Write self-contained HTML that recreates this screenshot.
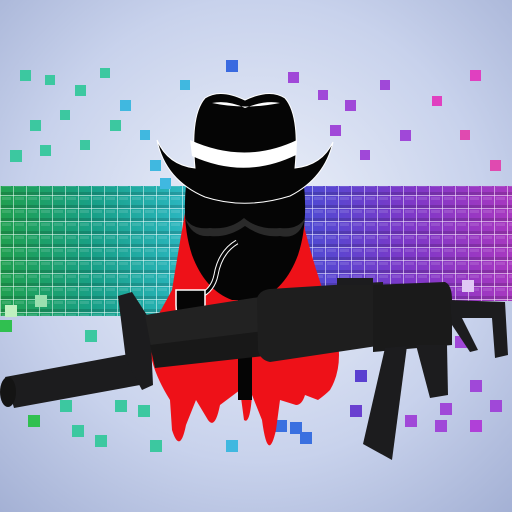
<!DOCTYPE html>
<html><head><meta charset="utf-8"><style>
html,body{margin:0;padding:0;width:512px;height:512px;overflow:hidden}
svg{display:block}
</style></head><body>
<svg width="512" height="512" viewBox="0 0 512 512" xmlns="http://www.w3.org/2000/svg">
<defs>
<radialGradient id="bg" cx="50%" cy="45%" r="75%">
<stop offset="0" stop-color="#eef2fa"/><stop offset="0.6" stop-color="#c8d2ec"/><stop offset="1" stop-color="#a3b0d4"/>
</radialGradient>
<linearGradient id="lw" x1="0" y1="0" x2="1" y2="0">
<stop offset="0" stop-color="#20a050"/><stop offset="0.5" stop-color="#18a088"/><stop offset="1" stop-color="#2cb8c4"/>
</linearGradient>
<linearGradient id="rw" x1="0" y1="0" x2="1" y2="0">
<stop offset="0" stop-color="#4c4cd4"/><stop offset="0.5" stop-color="#7c38c8"/><stop offset="1" stop-color="#a838c0"/>
</linearGradient>
<pattern id="grid" width="13" height="13" patternUnits="userSpaceOnUse">
<rect width="13" height="1" fill="rgba(255,255,255,0.5)"/>
<rect width="1" height="13" fill="rgba(255,255,255,0.5)"/>
<rect x="2" y="2" width="9" height="3" fill="rgba(255,255,255,0.12)"/>
<rect x="1" y="10" width="12" height="3" fill="rgba(0,0,0,0.15)"/>
</pattern>
</defs>
<rect width="512" height="512" fill="url(#bg)"/>
<rect x="0" y="186" width="190" height="130" fill="url(#lw)"/>
<rect x="0" y="186" width="190" height="130" fill="url(#grid)"/>
<rect x="300" y="186" width="212" height="115" fill="url(#rw)"/>
<rect x="300" y="186" width="212" height="115" fill="url(#grid)"/>
<g fill="#3cc8a0">
<rect x="20" y="70" width="11" height="11"/><rect x="45" y="75" width="10" height="10"/><rect x="75" y="85" width="11" height="11"/><rect x="100" y="68" width="10" height="10"/>
<rect x="30" y="120" width="11" height="11"/><rect x="60" y="110" width="10" height="10"/><rect x="10" y="150" width="12" height="12"/><rect x="40" y="145" width="11" height="11"/>
<rect x="80" y="140" width="10" height="10"/><rect x="110" y="120" width="11" height="11"/><rect x="0" y="320" width="12" height="12" fill="#30c050"/>
<rect x="28" y="415" width="12" height="12" fill="#30c050"/><rect x="60" y="400" width="12" height="12"/><rect x="72" y="425" width="12" height="12"/><rect x="95" y="435" width="12" height="12"/>
<rect x="115" y="400" width="12" height="12"/><rect x="138" y="405" width="12" height="12"/><rect x="150" y="440" width="12" height="12"/><rect x="85" y="330" width="12" height="12"/>
<rect x="35" y="295" width="12" height="12" fill="#9ae0b0"/><rect x="5" y="305" width="12" height="12" fill="#c0f0c0"/>
</g>
<g fill="#40b8e0">
<rect x="120" y="100" width="11" height="11"/><rect x="140" y="130" width="10" height="10"/><rect x="150" y="160" width="11" height="11"/><rect x="180" y="80" width="10" height="10"/>
<rect x="160" y="178" width="11" height="11"/><rect x="226" y="60" width="12" height="12" fill="#3a6ae0"/><rect x="226" y="440" width="12" height="12"/>
<rect x="275" y="420" width="12" height="12" fill="#3a70e0"/><rect x="290" y="422" width="12" height="12" fill="#3a70e0"/><rect x="300" y="432" width="12" height="12" fill="#3a70e0"/>
</g>
<g fill="#a048d8">
<rect x="288" y="72" width="11" height="11"/><rect x="318" y="90" width="10" height="10"/><rect x="345" y="100" width="11" height="11"/><rect x="380" y="80" width="10" height="10"/>
<rect x="330" y="125" width="11" height="11"/><rect x="360" y="150" width="10" height="10"/><rect x="400" y="130" width="11" height="11"/><rect x="432" y="96" width="10" height="10" fill="#e040c0"/>
<rect x="470" y="70" width="11" height="11" fill="#e040c0"/><rect x="460" y="130" width="10" height="10" fill="#e04ab0"/><rect x="490" y="160" width="11" height="11" fill="#e04ab0"/>
<rect x="355" y="370" width="12" height="12" fill="#5a40d0"/><rect x="350" y="405" width="12" height="12" fill="#6a40d0"/><rect x="405" y="415" width="12" height="12"/>
<rect x="455" y="336" width="12" height="12"/><rect x="470" y="380" width="12" height="12"/><rect x="440" y="403" width="12" height="12"/><rect x="435" y="420" width="12" height="12"/>
<rect x="470" y="420" width="12" height="12" fill="#b040d8"/><rect x="490" y="400" width="12" height="12"/><rect x="462" y="280" width="12" height="12" fill="#e0c8f4"/>
</g>
<path d="M190 185 Q180 240 172 290 L150 330 Q145 360 170 400 L172 430 Q180 455 186 425 L196 400 L208 420 Q215 430 220 405 L240 390 L244 420 Q250 425 252 395 L262 420 Q268 465 276 430 L280 400 L296 405 Q302 405 305 395 L318 400 Q325 395 330 390 Q348 360 330 310 Q315 270 305 230 L298 185 Z" fill="#ee1118"/>
<path d="M186 185 L304 185 Q308 225 298 255 Q285 290 258 300 L232 300 Q205 290 192 255 Q182 225 186 185 Z" fill="#050505"/>
<rect x="238" y="290" width="14" height="110" fill="#050505"/>
<path d="M185 218 Q192 230 210 228 Q230 230 244 218 Q258 230 280 228 Q298 230 305 218 Q300 240 280 236 Q262 238 245 226 Q228 238 210 236 Q192 238 185 218 Z" fill="#2a2a2a"/>
<path d="M157 140 Q165 180 205 197 Q245 210 290 196 Q325 178 333 142 Q322 165 295 168 Q300 115 285 98 Q270 88 245 100 Q220 88 205 98 Q190 115 195 168 Q168 165 157 140 Z" fill="#050505" stroke="#fff" stroke-width="1"/>
<path d="M212 103 Q245 110 280 103 Q265 100 245 108 Q228 100 212 103 Z" fill="#fff"/>
<path d="M190 140 Q245 165 297 140 L296 155 Q245 180 192 156 Z" fill="#fff"/>
<path d="M237 242 Q220 252 216 275 Q213 290 200 296" stroke="#fff" stroke-width="5" fill="none"/>
<path d="M237 242 Q220 252 216 275 Q213 290 200 296" stroke="#050505" stroke-width="3" fill="none"/>
<path d="M176 290 L205 290 L205 305 Q205 322 190 322 Q176 322 176 305 Z" fill="#050505" stroke="#fff" stroke-width="1.5"/>
<g fill="#1c1c1e">
<path d="M5 377 L135 353 L140 385 L14 408 Z"/>
<ellipse cx="8" cy="392" rx="8" ry="15" fill="#141414"/>
<path d="M118 296 L132 292 L150 320 L153 385 L142 390 L126 360 Z"/>
<path d="M145 315 L272 295 L273 335 L152 352 Z" fill="#222"/>
<path d="M150 345 L272 330 L273 355 L155 368 Z" fill="#181818"/>
<path d="M257 298 Q260 290 270 289 L383 282 L384 345 L270 362 Q260 360 258 350 Z" fill="#1e1e1e"/>
<path d="M373 285 L445 282 Q452 285 452 300 L452 345 L373 352 Z" fill="#1a1a1a"/>
<rect x="337" y="278" width="36" height="7"/>
<path d="M385 348 L407 346 L392 460 L363 444 Z"/>
<path d="M416 345 L447 345 L448 395 L430 398 Z"/>
<path d="M450 300 L505 302 L508 355 L495 358 L492 318 L462 318 L478 350 L470 352 L452 325 Z"/>
</g>
</svg>
</body></html>
